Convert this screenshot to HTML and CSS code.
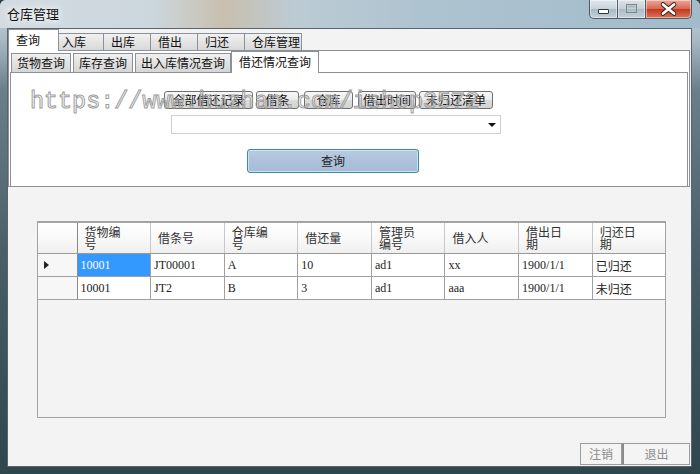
FILE: index.html
```html
<!DOCTYPE html>
<html lang="zh-CN">
<head>
<meta charset="utf-8">
<title>仓库管理</title>
<link rel="stylesheet" href="styles.css">
</head>
<body>
<div class="window">
  <div class="titlebar">
    <span class="title">仓库管理</span>
    <div class="wctrls">
      <span class="wbtn wmin"><svg width="27" height="18" viewBox="0 0 27 18"><rect x="8.5" y="9.5" width="10" height="4" rx="0.5" fill="#fff" stroke="#2b3540" stroke-width="1"/></svg></span>
      <span class="wbtn wmax"><svg width="27" height="18" viewBox="0 0 27 18"><rect x="8.5" y="4.5" width="10" height="8" fill="none" stroke="#7c8790" stroke-width="1"/><rect x="9.5" y="5.5" width="8" height="2" fill="#aab4bb"/></svg></span>
      <span class="wbtn wclose"><svg width="45" height="18" viewBox="0 0 45 18"><path d="M17 4.5 L28 13.5 M28 4.5 L17 13.5" stroke="#3a1a14" stroke-width="4.6" stroke-linecap="round"/><path d="M17 4.5 L28 13.5 M28 4.5 L17 13.5" stroke="#fff" stroke-width="2.8" stroke-linecap="round"/></svg></span>
    </div>
  </div>
  <div class="client">
    <div class="tabs1">
      <span class="tab1 sel">查询</span>
      <span class="tab1 first">入库</span>
      <span class="tab1">出库</span>
      <span class="tab1">借出</span>
      <span class="tab1">归还</span>
      <span class="tab1 wide">仓库管理</span>
    </div>
    <div class="page1">
      <div class="tabs2">
        <span class="tab2">货物查询</span>
        <span class="tab2">库存查询</span>
        <span class="tab2">出入库情况查询</span>
        <span class="tab2 sel">借还情况查询</span>
      </div>
      <div class="page2">
        <div class="btnrow">
          <span class="sbtn b1">全部借还记录</span>
          <span class="sbtn b2">借条</span>
          <span class="sbtn b3">仓库</span>
          <span class="sbtn b4">借出时间</span>
          <span class="sbtn b5">未归还清单</span>
        </div>
        <div class="combo"><span class="arrow"></span></div>
        <div class="qbtn">查询</div>
      </div>
    </div>
    <div class="grid">
      <table>
        <colgroup>
          <col class="c-rh">
          <col class="c"><col class="c"><col class="c"><col class="c">
          <col class="c"><col class="c"><col class="c"><col class="c">
        </colgroup>
        <thead>
          <tr>
            <th class="rh"></th>
            <th>货物编<br>号</th>
            <th>借条号</th>
            <th>仓库编<br>号</th>
            <th>借还量</th>
            <th>管理员<br>编号</th>
            <th>借入人</th>
            <th>借出日<br>期</th>
            <th>归还日<br>期</th>
          </tr>
        </thead>
        <tbody>
          <tr>
            <td class="rh"><span class="cur"></span></td>
            <td class="selcell">10001</td>
            <td>JT00001</td>
            <td>A</td>
            <td>10</td>
            <td>ad1</td>
            <td>xx</td>
            <td>1900/1/1</td>
            <td>已归还</td>
          </tr>
          <tr>
            <td class="rh"></td>
            <td>10001</td>
            <td>JT2</td>
            <td>B</td>
            <td>3</td>
            <td>ad1</td>
            <td>aaa</td>
            <td>1900/1/1</td>
            <td>未归还</td>
          </tr>
        </tbody>
      </table>
    </div>
    <div class="footer">
      <span class="fbtn f1">注销</span>
      <span class="fbtn f2">退出</span>
    </div>
  </div>
  <div class="watermark">https://www.huzhan.com/ishop3572</div>
</div>
</body>
</html>
```

FILE: styles.css
```css
html, body {
  margin: 0;
  padding: 0;
  width: 700px;
  height: 474px;
  overflow: hidden;
  background: #2c3f44;
}

body {
  font-family: "Noto Sans CJK SC", "Liberation Sans", sans-serif;
  font-size: 12px;
  color: #000;
}

.window {
  position: relative;
  width: 700px;
  height: 474px;
  display: flex;
  flex-direction: column;
  background: linear-gradient(180deg, #c9d4dc 0px, #a9b9c3 40px, #6a7f88 90px, #4a5f67 250px, #2e464c 474px);
  border-radius: 6px 6px 0 0;
  overflow: hidden;
}

.titlebar {
  height: 28px;
  flex: none;
  display: flex;
  align-items: flex-start;
  background: linear-gradient(90deg, #d3dbe1 0%, #ccd6dd 22%, #c8bfae 32%, #bccbd4 42%, #aec3d0 60%, #a2bbca 100%);
}

.title {
  padding-left: 7px;
  line-height: 28px;
  font-size: 13px;
  color: #111;
  text-shadow: 0 0 6px #fff, 0 0 10px rgba(255,255,255,0.9);
}

.wctrls {
  margin-left: auto;
  margin-right: 8px;
  display: flex;
  height: 19px;
}

.wbtn {
  display: block;
  height: 18px;
  border: 1px solid #4d5c66;
  border-top: none;
  box-shadow: inset 0 0 0 1px rgba(255,255,255,0.45);
}

.wbtn svg { display: block; }

.wmin {
  width: 27px;
  border-radius: 0 0 0 5px;
  background: linear-gradient(180deg, #e1e8ed 0%, #c7d3db 48%, #a9bac5 52%, #c2d1da 100%);
}

.wmax {
  width: 27px;
  border-left: none;
  background: linear-gradient(180deg, #dce3e8 0%, #c5cfd6 48%, #aebcc6 52%, #c4d0d8 100%);
}

.wclose {
  width: 45px;
  border-left: none;
  border-radius: 0 0 5px 0;
  background: linear-gradient(180deg, #eaa898 0%, #d86a55 48%, #c4391f 52%, #d9745a 100%);
}

.client {
  flex: 1;
  margin: 0 8px 7px 7px;
  background: #f3f3f3;
  border: 1px solid #56666c;
  display: flex;
  flex-direction: column;
}

/* outer tabs */
.tabs1 {
  height: 21px;
  display: flex;
  align-items: flex-end;
  flex: none;
}

.tab1 {
  box-sizing: border-box;
  width: 47px;
  height: 17px;
  padding-left: 7px;
  line-height: 16px;
  border: 1px solid #8c9097;
  border-bottom: none;
  border-left: none;
  background: linear-gradient(180deg, #f2f2f2 0%, #e4e4e4 50%, #d8d8d8 100%);
  color: #111;
}

.tab1.first { width: 45px; padding-left: 3px; }

.tab1.wide { width: 57px; }

.tab1.sel {
  width: 51px;
  height: 22px;
  padding-left: 7px;
  line-height: 20px;
  border-left: 1px solid #8c9097;
  background: #fff;
  margin-bottom: -1px;
  position: relative;
  z-index: 1;
}

.page1 {
  box-sizing: border-box;
  height: 137px;
  margin-right: 1px;
  border: 1px solid #8c9097;
  background: #fff;
  padding: 0 1px;
  display: flex;
  flex-direction: column;
  flex: none;
}

.tabs2 {
  height: 21px;
  display: flex;
  align-items: flex-end;
  padding-left: 1px;
  flex: none;
}

.tab2 {
  box-sizing: border-box;
  height: 19px;
  padding: 0 5px;
  margin-right: 2px;
  line-height: 18px;
  border: 1px solid #8c9097;
  border-bottom: none;
  background: linear-gradient(180deg, #f0f0f0 0%, #e2e2e2 50%, #d6d6d6 100%);
  color: #111;
}

.tab2.sel {
  height: 22px;
  margin-left: -2px;
  padding: 0 7px;
  line-height: 19px;
  background: #fff;
  margin-bottom: -1px;
  position: relative;
  z-index: 1;
}

.page2 {
  box-sizing: border-box;
  flex: 1;
  border: 1px solid #8c9097;
  border-bottom: none;
  background: #fff;
  display: flex;
  flex-direction: column;
  align-items: flex-start;
}

.btnrow {
  display: flex;
  margin: 18px 0 0 153px;
}

.sbtn {
  box-sizing: border-box;
  height: 18px;
  line-height: 15px;
  text-align: center;
  border: 1px solid #6f6f6f;
  border-radius: 3px;
  background: linear-gradient(180deg, #f7f7f7 0%, #ebebeb 50%, #dcdcdc 51%, #d3d3d3 100%);
  font-size: 12px;
  color: #111;
}

.b1 { width: 89px; }
.b2 { width: 43px; margin-left: 3px; }
.b3 { width: 49px; margin-left: 5px; }
.b4 { width: 58px; margin-left: 5px; }
.b5 { width: 74px; margin-left: 3px; }

.combo {
  box-sizing: border-box;
  position: relative;
  width: 330px;
  height: 19px;
  margin: 6px 0 0 160px;
  border: 1px solid #cfcfcf;
  background: #fff;
}

.arrow {
  position: absolute;
  right: 4px;
  top: 7px;
  width: 0;
  height: 0;
  border-left: 4px solid transparent;
  border-right: 4px solid transparent;
  border-top: 4px solid #111;
}

.qbtn {
  box-sizing: border-box;
  width: 172px;
  height: 24px;
  margin: 15px 0 0 236px;
  border: 1px solid #3f8aa6;
  border-radius: 3px;
  background: linear-gradient(180deg, #b8cbe0 0%, #adc1da 50%, #a6bcd6 100%);
  box-shadow: inset 0 0 0 1px #cfe0ee;
  text-align: center;
  line-height: 21px;
  font-size: 12px;
  color: #222;
}

/* grid */
.grid {
  box-sizing: border-box;
  width: 629px;
  height: 197px;
  margin: 34px 0 0 29px;
  border: 1px solid #a3a3a3;
  border-top: 2px solid #a3a3a3;
  background: #f3f3f3;
  flex: none;
  overflow: hidden;
}

.grid table {
  border-collapse: collapse;
  table-layout: fixed;
  width: 628px;
}

.c-rh { width: 39px; }
.c { width: 73.6px; }

.grid th {
  height: 30px;
  padding: 0 0 0 7px;
  text-align: left;
  font-weight: normal;
  font-size: 12px;
  line-height: 12px;
  color: #333;
  background: linear-gradient(180deg, #ffffff 0%, #f7f7f7 60%, #efefef 100%);
  border-left: 1px solid #c8c8c8;
  border-bottom: 1px solid #9a9a9a;
  vertical-align: middle;
}

.grid th.rh { border-left: none; border-right: 1px solid #8a8a8a; }

.grid td {
  height: 22px;
  padding: 0 0 0 3px;
  font-family: "Liberation Serif", "Noto Sans CJK SC", serif;
  font-size: 12px;
  color: #222;
  background: #fff;
  border: 1px solid #a0a0a0;
  white-space: nowrap;
  overflow: hidden;
  vertical-align: middle;
}

.grid td:last-child { font-family: "Noto Sans CJK SC", sans-serif; }

.grid td.rh {
  background: #f7f7f7;
  border-left: none;
  border-right: 1px solid #8a8a8a;
  padding: 0;
}

.grid td.selcell {
  background: #3399ff;
  color: #fff;
}

.cur {
  display: block;
  width: 0;
  height: 0;
  margin-left: 6px;
  border-top: 4px solid transparent;
  border-bottom: 4px solid transparent;
  border-left: 5px solid #222;
}

/* footer */
.footer {
  display: flex;
  justify-content: flex-end;
  margin: 25px 1px 0 0;
  flex: none;
}

.fbtn {
  box-sizing: border-box;
  height: 22px;
  line-height: 20px;
  text-align: center;
  border: 1px solid #9c9c9c;
  background: #f4f4f4;
  color: #8d8d8d;
  font-size: 12px;
}

.f1 { width: 42px; }
.f2 { width: 68px; border-left: 2px solid #8a8a8a; }

/* watermark overlay */
.watermark {
  position: absolute;
  left: 30px;
  top: 89px;
  font-family: "Liberation Mono", monospace;
  font-size: 23.4px;
  line-height: normal;
  white-space: nowrap;
  color: transparent;
  -webkit-text-stroke: 1px #9e9e9e;
  pointer-events: none;
  z-index: 5;
}
```
